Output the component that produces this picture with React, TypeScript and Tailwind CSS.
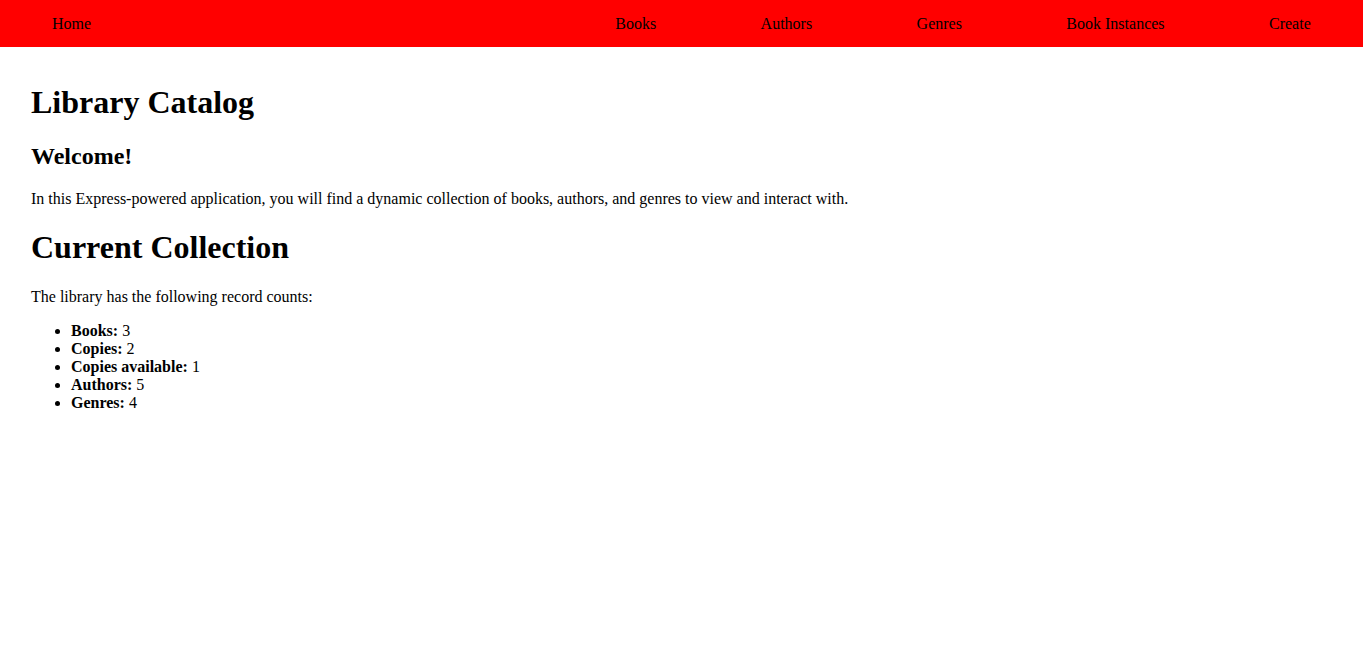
import React from "react";

const navLinks = ["Books", "Authors", "Genres", "Book Instances", "Create"];

const counts: { label: string; value: number }[] = [
  { label: "Books:", value: 3 },
  { label: "Copies:", value: 2 },
  { label: "Copies available:", value: 1 },
  { label: "Authors:", value: 5 },
  { label: "Genres:", value: 4 },
];

export default function App() {
  return (
    <div className="min-h-screen bg-white text-black font-['Liberation_Serif','Times_New_Roman',serif] text-[16px] leading-[18px]">
      <nav className="flex h-[47px] items-center bg-[#ff0000] pt-[1px]">
        <a href="#" className="pl-[52px]">
          Home
        </a>
        <ul className="ml-auto flex w-[800px] justify-around">
          {navLinks.map((link) => (
            <li key={link}>
              <a href="#">{link}</a>
            </li>
          ))}
        </ul>
      </nav>

      <main className="px-[31px]">
        <h1 className="mt-[37px] text-[32px] leading-[37px] font-bold">
          Library Catalog
        </h1>
        <h2 className="mt-[22px] text-[24px] leading-[27.6px] font-bold">
          Welcome!
        </h2>
        <p className="mt-[19px]">
          In this Express-powered application, you will find a dynamic
          collection of books, authors, and genres to view and interact with.
        </p>

        <h1 className="mt-[21.5px] text-[32px] leading-[37px] font-bold">
          Current Collection
        </h1>
        <p className="mt-[21.5px]">The library has the following record counts:</p>

        <ul className="mt-[16px] list-disc pl-[40px]">
          {counts.map((c) => (
            <li key={c.label}>
              <strong>{c.label}</strong> {c.value}
            </li>
          ))}
        </ul>
      </main>
    </div>
  );
}
